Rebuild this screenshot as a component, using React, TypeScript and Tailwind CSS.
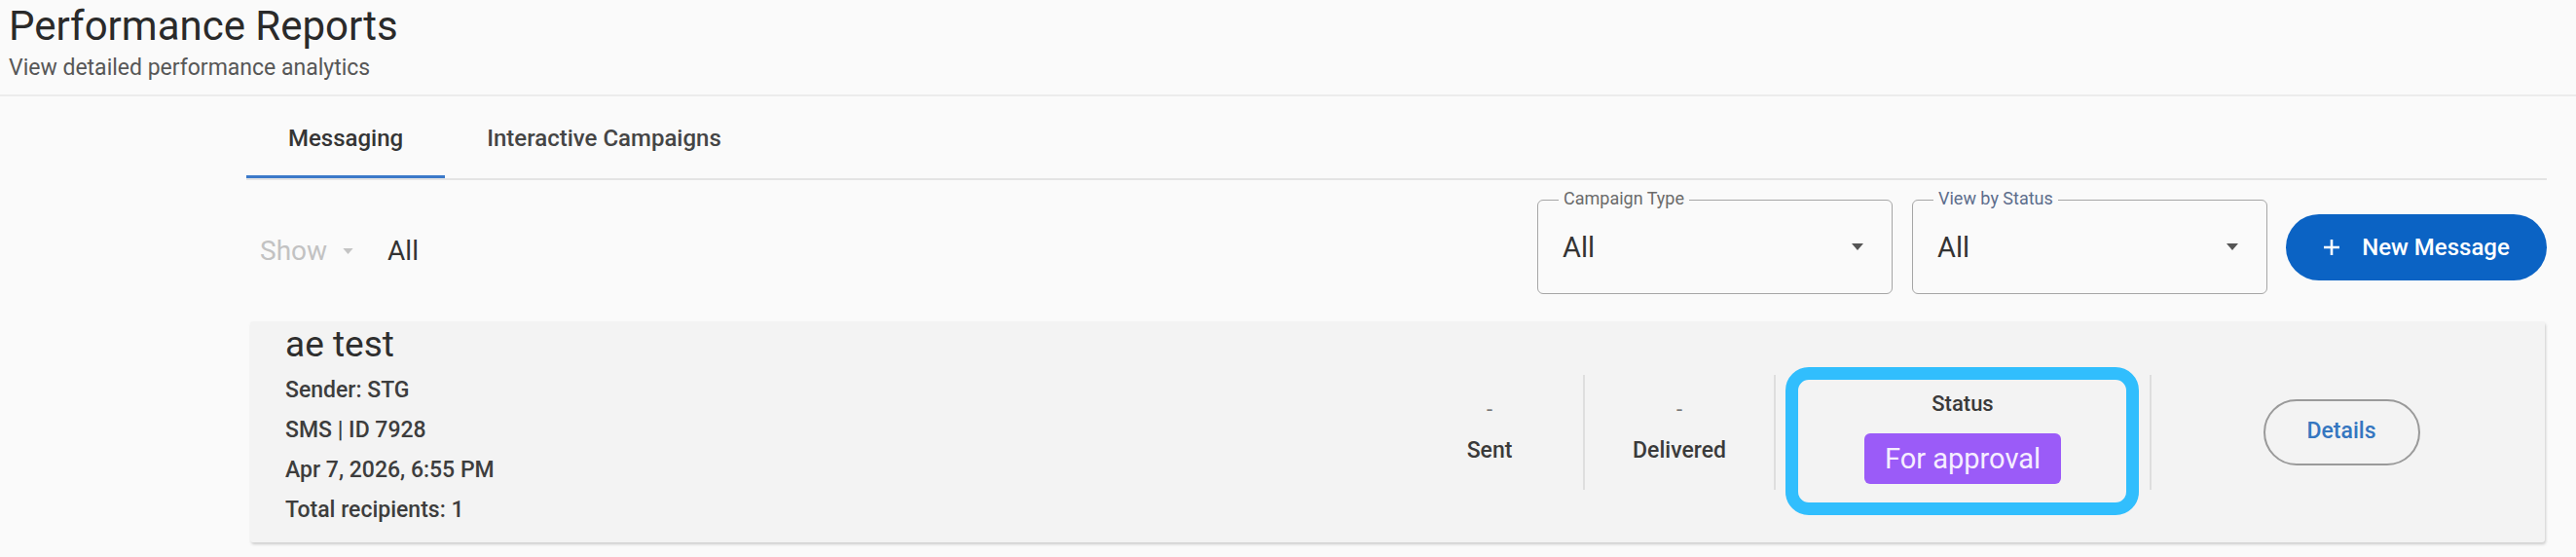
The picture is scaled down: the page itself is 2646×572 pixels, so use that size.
import React from "react";

const Caret = ({ className }: { className: string }) => (
    <svg viewBox="0 0 12 7" className={className}>
        <path d="M0 0h12L6 7z" fill="currentColor" />
    </svg>
);

interface SelectBoxProps {
    label: string;
    labelClass: string;
    value: string;
}

const SelectBox: React.FC<SelectBoxProps> = ({ label, labelClass, value }) => (
    <div className="relative flex h-[97px] w-[365px] items-center rounded-[6px] border-[1.5px] border-[#a6a6a6] pl-[25px] pr-[29px]">
        <span className={`absolute -top-[13px] left-[21px] bg-[#fafafa] px-[5px] text-[18px] leading-[22px] ${labelClass}`}>
            {label}
        </span>
        <span className="flex-1 text-[29px] leading-[34px] text-[#333]">{value}</span>
        <Caret className="h-[7px] w-[12px] text-[#555]" />
    </div>
);

const Stat: React.FC<{ label: string }> = ({ label }) => (
    <div className="flex h-full flex-col items-center justify-center pb-[4px]">
        <span className="text-[22px] leading-[26px] text-[#777]">-</span>
        <span className="mt-[16px] text-[23px] font-medium leading-[26px] text-[#3a3a3a]">{label}</span>
    </div>
);

const Divider = () => <div className="h-[118px] w-[2px] bg-[#dedede]" />;

export default function App() {
    return (
        <div className="h-[572px] w-[2646px] overflow-hidden bg-[#fafafa] font-['Roboto','Liberation_Sans',sans-serif] text-[#333]">
            <div className="pl-[9px] pt-[3px]">
                <h1 className="text-[42px] leading-[48px] text-[#2a2a2a]">Performance Reports</h1>
                <p className="mt-[5px] text-[23px] leading-[28px] text-[#575757]">View detailed performance analytics</p>
            </div>
            <div className="mt-[13px] h-[2px] bg-[#ececec]" />

            <div className="ml-[253px] w-[2363px]">
                {/* tabs */}
                <div className="flex border-b-2 border-[#e4e4e4]">
                    <div className="flex h-[84px] items-center border-b-[3px] border-[#3b79c9] px-[43px] pt-[4px] text-[24px] font-medium text-[#353535]">
                        Messaging
                    </div>
                    <div className="flex h-[84px] items-center border-b-[3px] border-transparent px-[43px] pt-[4px] text-[24px] font-medium text-[#454545]">
                        Interactive Campaigns
                    </div>
                </div>

                {/* filters */}
                <div className="mt-[20px] flex h-[97px] items-center">
                    <div className="flex flex-1 items-center pl-[14px] pt-[9px]">
                        <span className="text-[28px] leading-[32px] text-[#c2c2c2]">Show</span>
                        <Caret className="ml-[16px] h-[6px] w-[11px] text-[#c4c4c4]" />
                        <span className="ml-[35px] text-[28px] leading-[32px] text-[#333]">All</span>
                    </div>
                    <SelectBox label="Campaign Type" labelClass="text-[#6b6b6b]" value="All" />
                    <div className="ml-[20px]">
                        <SelectBox label="View by Status" labelClass="text-[#5d6d8c]" value="All" />
                    </div>
                    <button className="ml-[19px] flex h-[68px] w-[268px] items-center justify-center gap-[22px] rounded-full bg-[#0b63c4] text-[24px] font-medium text-white">
                        <svg viewBox="0 0 18 18" className="h-[18px] w-[18px]">
                            <path d="M9 1v16M1 9h16" stroke="currentColor" strokeWidth="2.6" />
                        </svg>
                        New Message
                    </button>
                </div>

                {/* message card */}
                <div className="mt-[28px] ml-[4px] mr-[2px] flex h-[227px] rounded-[3px] bg-[#f3f3f3] shadow-[1px_2px_3px_rgba(0,0,0,0.18)]">
                    <div className="flex-1 pl-[36px] pt-[2px]">
                        <div className="text-[37px] leading-[44px] text-[#2e2e2e]">ae test</div>
                        <div className="mt-[4px] text-[23px] font-medium leading-[41px] text-[#3d3d3d]">
                            <div>Sender: STG</div>
                            <div>SMS | ID 7928</div>
                            <div>Apr 7, 2026, 6:55 PM</div>
                            <div>Total recipients: 1</div>
                        </div>
                    </div>
                    <div className="flex h-full items-center">
                        <div className="h-full w-[192px]">
                            <Stat label="Sent" />
                        </div>
                        <Divider />
                        <div className="h-full w-[194px]">
                            <Stat label="Delivered" />
                        </div>
                        <Divider />
                        <div className="relative flex h-full w-[384px] flex-col items-center justify-center pt-[12px]">
                            <span className="text-[22px] font-medium leading-[26px] text-[#3a3a3a]">Status</span>
                            <span className="mt-[17px] flex h-[52px] w-[202px] items-center justify-center rounded-[6px] bg-[#9b5bf8] text-[29px] leading-[34px] text-[#f6eeff]">
                                For approval
                            </span>
                            <div className="absolute left-[10px] right-[11px] top-[47px] bottom-[28px] rounded-[24px] border-[13px] border-[#31befd]" />
                        </div>
                        <Divider />
                        <div className="flex h-full w-[390px] items-center justify-center">
                            <button className="h-[68px] w-[161px] rounded-full border-2 border-[#9a9a9a] text-[23px] font-medium text-[#3576c0]">
                                Details
                            </button>
                        </div>
                        <div className="w-[14px]" />
                    </div>
                </div>
            </div>
        </div>
    );
}
